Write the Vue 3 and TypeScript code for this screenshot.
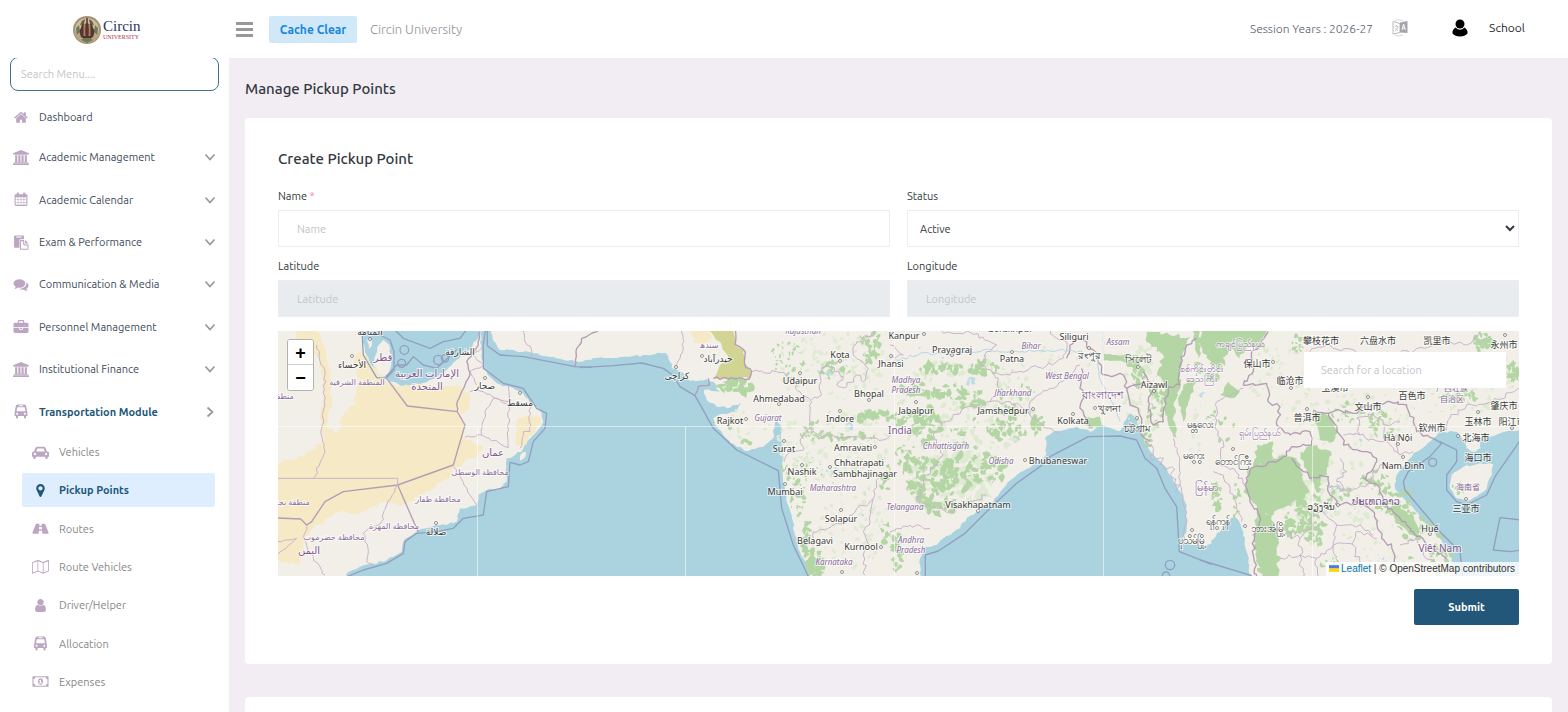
<script setup lang="ts">
import { ref } from 'vue'

type Pt = [number, number]
interface IconDef { box: string; path: string }
interface MenuItem { label: string; icon: string; open?: boolean; current?: boolean }
interface Line { pts: string; kind: string; rough?: number }
interface MapLabel { t: string; x: number; y: number; k: string }

const icons: Record<string, IconDef> = {
  home: { box: '0 0 1792 1792', path: 'M1472 992v480q0 26-19 45t-45 19h-384v-384h-256v384h-384q-26 0-45-19t-19-45v-480q0-1 .5-3t.5-3l575-474 575 474q1 2 1 6zm223-69l-62 74q-8 9-21 11h-3q-13 0-21-7l-692-577-692 577q-12 8-24 7-13-2-21-11l-62-74q-8-10-7-23.5t11-21.5l719-599q32-26 76-26t76 26l244 204v-195q0-14 9-23t23-9h192q14 0 23 9t9 23v408l219 182q10 8 11 21.5t-7 23.5z' },
  university: { box: '0 0 1920 1792', path: 'M960 0l960 384v128h-128q0 26-20.5 45t-48.5 19h-1526q-28 0-48.5-19t-20.5-45h-128v-128zm-704 640h256v768h128v-768h256v768h128v-768h256v768h128v-768h256v768h59q28 0 48.5 19t20.5 45v64h-1664v-64q0-26 20.5-45t48.5-19h59v-768zm1595 960q28 0 48.5 19t20.5 45v128h-1920v-128q0-26 20.5-45t48.5-19h1782z' },
  calendar: { box: '0 0 28 28', path: 'M7 1h2q1 0 1 1v2h8V2q0-1 1-1h2q1 0 1 1v2h2q2 0 2 2v18q0 2-2 2H4q-2 0-2-2V6q0-2 2-2h2V2q0-1 1-1zM4 10v4h4v-4zm5 0v4h4.500v-4zm5.500 0v4H19v-4zm5.500 0v4h4v-4zM4 15v4h4v-4zm5 0v4h4.500v-4zm5.500 0v4H19v-4zm5.500 0v4h4v-4zM4 20v4h4v-4zm5 0v4h4.500v-4zm5.500 0v4H19v-4zm5.500 0v4h4v-4z' },
  paste: { box: '0 0 28 28', path: 'M2 1h16q1.500 0 1.500 1.500V8H13q-2 0-2 2v14H2Q1 24 1 22.500v-20Q1 1 2 1zm3 2v1.500h10V3zM13 9.500h7V16q0 1.500 1.500 1.500H28V26q0 1.500-1.500 1.500h-13Q12 27.500 12 26V11q0-1.500 1-1.500zm1 2V25.500h12v-6h-5.500Q18 19.500 18 17v-5.500zM21.500 9.500L28 16h-6.500z' },
  comments: { box: '0 0 1792 1792', path: 'M1408 768q0 139-94 257t-256.5 186.500-353.500 68.500q-86 0-176-16-124 88-278 128-36 9-86 16h-3q-11 0-20.500-8t-11.500-21q-1-3-1-6.500t.5-6.500 2-6l2.500-5 3.500-5.500 4-5 4.500-5 4-4.500q5-6 23-25t26-29.500 22.500-29 25-38.500 20.500-44q-124-72-195-177t-71-224q0-139 94-257t256.500-186.500 353.500-68.500 353.500 68.500 256.500 186.500 94 257zm384 256q0 120-71 224.500t-195 176.500q10 24 20.500 44t25 38.500 22.500 29 26 29.500 23 25q1 1 4 4.500t4.500 5 4 5 3.500 5.500l2.500 5 2 6 .5 6.500-1 6.500q-3 14-13 22t-22 7q-50-7-86-16-154-40-278-128-90 16-176 16-271 0-472-132 58 4 88 4 161 0 309-45t264-129q125-92 192-212t67-254q0-77-23-152 129 71 204 178t75 230z' },
  briefcase: { box: '0 0 28 28', path: 'M10 2h8q2 0 2 2v3h5.500Q28 7 28 9.500V15H0V9.500Q0 7 2.500 7H8V4q0-2 2-2zm0 2v3h8V4zM0 16.500h10.500V19q0 1 1 1h5q1 0 1-1v-2.500H28v7q0 2.500-2.500 2.500h-23Q0 26 0 23.500zm12 0h4v2h-4z' },
  bus: { box: '0 0 24 28', path: 'M6 1h12q3.500 0 4 4l1.500 9q.500 2 .5 4v4.500h-2.500V25q0 2-2 2t-2-2v-2.500h-11V25q0 2-2 2t-2-2v-2.500H0V18q0-2 .5-4L2 5q.500-4 4-4zm2 1.500V4h8V2.500zM5 6L3.800 13.500h16.400L19 6zM4.700 16.500a1.800 1.800 0 1 0 .1 0zm14.500 0a1.800 1.800 0 1 0 .1 0z' },
  car: { box: '0 0 32 28', path: 'M10 3h12q3 0 4 3l1.800 6H29q3 0 3 3v7h-2.500v2q0 2.500-2 2.500t-2.500-2.500v-2H7v2q0 2.500-2.500 2.500T2.500 24v-2H0v-7q0-3 3-3h1.200L6 6q1-3 4-3zm0 3.500L8 12h16l-2-5.500zM5.500 14.500a2.300 2.300 0 1 0 .1 0zm21 0a2.300 2.300 0 1 0 .1 0z' },
  pin: { box: '0 0 1792 1792', path: 'M1152 640q0-106-75-181t-181-75-181 75-75 181 75 181 181 75 181-75 75-181zm256 0q0 109-33 179l-364 774q-16 33-47.500 52t-67.500 19-67.500-19-46.500-52l-365-774q-33-70-33-179 0-212 150-362t362-150 362 150 150 362z' },
  road: { box: '0 0 30 28', path: 'M7.500 5H13l-.3 4h4.600L17 5h5.500q1 0 1.500 1.500l6 15q.500 2.500-1.500 2.500h-10l-.5-6h-6l-.5 6h-10q-2 0-1.500-2.500l6-15Q6.500 5 7.500 5zm5 6l-.4 4.500h5.800L17.500 11z' },
  map: { box: '0 0 32 28', path: 'M11 1.500l10 4 10-4q1 0 1 1v19.500q0 .8-.8 1.200L21 27.500l-10-4-10 4q-1 0-1-1V7q0-.8.8-1.200zM1.500 7.500v18l8.800-3.500V4zm10.300-3.600V22l8.500 3.500v-18zm10 3.600v18l8.700-3.500V4z' },
  user: { box: '0 0 1792 1792', path: 'M1536 1399q0 109-62.500 187t-150.500 78h-854q-88 0-150.500-78t-62.500-187q0-85 8.500-160.500t31.500-152 58.500-131 94-89 134.500-34.500q131 128 313 128t313-128q76 0 134.500 34.500t94 89 58.500 131 31.500 152 8.500 160.500zm-256-887q0 159-112.500 271.500t-271.500 112.500-271.500-112.500-112.500-271.500 112.500-271.500 271.500-112.500 271.500 112.500 112.500 271.500z' },
  money: { box: '0 0 30 28', path: 'M1 4h28q1 0 1 1v18q0 1-1 1H1q-1 0-1-1V5q0-1 1-1zm4 2q0 4-3 4v8q3 0 3 4h20q0-4 3-4v-8q-3 0-3-4zm10 2q4.500 0 4.500 6T15 20t-4.500-6T15 8zm-.8 2.500l-2 1.500.8 1 .8-.5V16H12.500v1.500h5V16H16v-5.500z' },
}

const menu: MenuItem[] = [
  { label: 'Academic Management', icon: 'university' },
  { label: 'Academic Calendar', icon: 'calendar' },
  { label: 'Exam & Performance', icon: 'paste' },
  { label: 'Communication & Media', icon: 'comments' },
  { label: 'Personnel Management', icon: 'briefcase' },
  { label: 'Institutional Finance', icon: 'university' },
  { label: 'Transportation Module', icon: 'bus', open: true },
]
const submenu: MenuItem[] = [
  { label: 'Vehicles', icon: 'car' },
  { label: 'Pickup Points', icon: 'pin', current: true },
  { label: 'Routes', icon: 'road' },
  { label: 'Route Vehicles', icon: 'map' },
  { label: 'Driver/Helper', icon: 'user' },
  { label: 'Allocation', icon: 'bus' },
  { label: 'Expenses', icon: 'money' },
]

const menuQuery = ref('')
const name = ref('')
const status = ref('Active')
const place = ref('')

/* Seeded generator, so the terrain is the same on each load. */
let seed = 20267
function rnd(): number {
  seed = (seed * 16807) % 2147483647
  return seed / 2147483647
}
function parse(s: string): Pt[] {
  return s.trim().split(/\s+/).map(p => p.split(',').map(Number) as Pt)
}
/* Adds small bends between the given points. */
function wobble(s: string, amp: number, close = false): string {
  const pts = parse(s)
  if (close) pts.push(pts[0])
  let d = `M${pts[0][0]},${pts[0][1]}`
  for (let i = 1; i < pts.length; i++) {
    const [ax, ay] = pts[i - 1]
    const [bx, by] = pts[i]
    const n = amp ? Math.max(1, Math.round(Math.hypot(bx - ax, by - ay) / 11)) : 1
    for (let k = 1; k <= n; k++) {
      const f = k / n
      const j = k === n ? 0 : amp
      d += `L${Math.round(ax + (bx - ax) * f + (rnd() - 0.5) * j)},${Math.round(ay + (by - ay) * f + (rnd() - 0.5) * j)}`
    }
  }
  return close ? d + 'Z' : d
}
function blob(x: number, y: number, r: number): string {
  const n = 7
  const turn = rnd() * 3
  const stretch = 0.4 + rnd() * 0.4
  let d = ''
  for (let i = 0; i < n; i++) {
    const a = (i / n) * Math.PI * 2
    const q = r * (0.5 + rnd() * 0.9)
    const px = Math.cos(a) * q
    const py = Math.sin(a) * q * stretch
    d += `${i ? 'L' : 'M'}${Math.round(x + px * Math.cos(turn) - py * Math.sin(turn))},${Math.round(y + px * Math.sin(turn) + py * Math.cos(turn))}`
  }
  return d + 'Z'
}
function scatter(zones: number[][]): string {
  let d = ''
  for (const [cx, cy, rx, ry, n, r] of zones) {
    for (let i = 0; i < n; i++) {
      const a = rnd() * Math.PI * 2
      const q = Math.sqrt(rnd())
      d += blob(cx + Math.cos(a) * q * rx, cy + Math.sin(a) * q * ry, r * (0.4 + rnd()))
    }
  }
  return d
}

const sheets = [
  {
    shift: 'translate(-24 -18)',
    land: [
      '0,0 275,0 278,50 290,90 312,130 330,158 352,160 362,170 400,182 470,172 520,142 560,105 600,70 625,40 640,0 630,50 635,100 640,130 680,175 730,190 760,205 790,240 815,265 820,290 800,320 770,350 755,380 735,390 710,400 710,470 690,490 650,495 625,510 620,540 570,550 560,590 530,600 500,600 440,620 400,650 395,680 340,710 270,725 230,745 220,775 0,775',
      '660,0 668,45 690,75 720,75 790,85 850,95 915,110 965,104 965,0',
      '318,150 312,110 322,65 340,45 358,60 364,100 358,140 340,155',
      '290,45 302,40 306,62 296,72', '750,392 768,380 762,400 750,408',
    ],
    sand: [
      '80,0 130,0 160,60 182,150 186,230 170,300 200,330 222,270 250,240 265,180 255,100 272,75 310,125 355,180 400,183 560,180 600,210 562,260 585,300 580,335 640,370 610,400 550,430 540,455 470,500 400,540 340,530 280,560 200,560 130,610 100,650 90,720 0,700 0,420 100,395 158,350 150,300 160,200 150,100 80,50',
      '740,290 775,270 812,280 795,325 755,370 735,350', '565,225 600,210 600,250 575,270',
    ],
    scrub: [] as string[],
    woods: '',
    pale: '',
    wet: '',
    lines: [
      { pts: '350,160 412,243 562,260 585,300 550,420 383,480 220,500 165,530 125,590 110,600 92,582 0,578', kind: 'nation' },
      { pts: '562,260 562,230 585,180 600,150 590,110 625,60 630,20', kind: 'nation', rough: 5 },
      { pts: '383,480 445,622', kind: 'nation' },
      { pts: '648,0 640,60 640,130 700,175 760,190 800,250 830,265 825,310 790,350 775,410 750,420 720,412 715,485 650,500 640,570 580,580 550,610 500,620 440,625 405,650 400,685 350,715 280,735 220,760', kind: 'sea' },
      { pts: '652,0 652,62 690,90 760,95 850,112 915,125 965,127', kind: 'sea' },
      { pts: '275,0 280,90 320,158 348,160 372,135 372,80 360,45 330,30 345,0', kind: 'sea' },
      { pts: '360,0 400,40 480,70 520,50 570,40 600,0', kind: 'sea' },
      { pts: '348,155 380,120 410,120 430,95 460,120 500,130 560,75', kind: 'sea' },
      { pts: '0,460 383,460 383,480', kind: 'state' },
      { pts: '140,60 165,150 165,240 155,310 165,380 130,460', kind: 'state', rough: 10 },
      { pts: '383,480 350,540 335,590 280,625 295,680 290,710 310,718', kind: 'state', rough: 8 },
      { pts: '550,425 600,510 622,540', kind: 'state', rough: 6 },
      { pts: '585,337 635,330 715,368 715,240 640,200 600,200', kind: 'state', rough: 8 },
      { pts: '635,330 645,260 670,220 715,230 715,180', kind: 'state', rough: 8 },
      { pts: '780,225 780,320 760,320 750,370', kind: 'state', rough: 6 },
      { pts: '755,0 765,50 785,75 785,100', kind: 'state', rough: 6 },
      { pts: '915,125 920,70 955,30 960,0', kind: 'nation', rough: 8 },
      { pts: '110,600 100,640 130,700 165,750', kind: 'state', rough: 10 },
      { pts: '0,655 80,640 0,710', kind: 'state', rough: 4 },
      { pts: '640,60 610,90 640,120 600,140 620,180', kind: 'state', rough: 8 },
    ] as Line[],
    rings: [[403, 75, 13], [395, 115, 12], [505, 105, 14], [525, 100, 11]],
  },
  {
    shift: 'translate(906 -18)',
    land: [
      '0,0 0,105 40,100 100,100 150,95 200,90 258,84 270,110 275,130 310,145 330,168 380,163 400,170 420,200 372,195 380,225 410,245 450,248 482,232 470,262 420,268 400,280 405,298 430,330 470,365 505,378 550,365 580,340 583,310 590,285 605,310 605,350 612,400 605,440 615,490 620,530 635,570 645,630 660,680 690,740 690,775 960,775 960,0',
    ],
    sand: ['330,0 400,0 395,40 370,60 340,50'],
    scrub: ['378,0 462,0 465,60 492,75 495,115 515,145 508,160 400,162 420,120 445,105 425,60'],
    woods: scatter([[470, 185, 50, 20, 26, 14], [625, 100, 60, 50, 30, 6], [760, 135, 50, 25, 26, 7], [870, 60, 35, 55, 34, 9], [890, 275, 60, 18, 34, 10], [700, 320, 40, 30, 22, 7], [800, 335, 90, 12, 24, 8], [500, 350, 20, 8, 8, 9], [445, 312, 12, 6, 4, 5], [620, 440, 18, 40, 12, 5], [655, 520, 24, 50, 22, 8], [680, 640, 12, 55, 22, 9], [705, 715, 25, 40, 40, 11], [930, 470, 30, 50, 30, 9], [930, 640, 28, 60, 22, 8], [700, 450, 80, 60, 22, 4]]),
    pale: scatter([[760, 130, 170, 110, 110, 8], [760, 360, 170, 110, 120, 8], [820, 600, 110, 130, 80, 7], [500, 300, 90, 50, 20, 6]]),
    wet: scatter([[810, 300, 10, 12, 4, 8], [760, 440, 20, 16, 6, 6], [740, 130, 30, 20, 6, 5], [870, 550, 30, 60, 8, 4]]),
    lines: [
      { pts: '0,128 100,122 185,114 250,130 278,150 300,185 345,212 375,265 400,310 470,375 595,437 605,550 640,660 695,775', kind: 'sea' },
      { pts: '345,212 355,185 388,180 385,160', kind: 'nation', rough: 6 },
      { pts: '400,160 508,162 515,140 495,120 492,75 465,58 465,0', kind: 'nation', rough: 8 },
      { pts: '0,60 5,40 50,20 60,0', kind: 'nation', rough: 6 },
      { pts: '515,140 590,140 640,160 655,200 695,230 690,260 690,310 660,345 670,375 620,390 612,410', kind: 'state', rough: 12 },
      { pts: '695,225 725,210 720,150 740,120 790,155 770,180 800,185 830,150 850,170 865,130 820,90 830,50 890,20', kind: 'state', rough: 12 },
      { pts: '690,310 730,335 820,335 910,345 945,320', kind: 'state', rough: 10 },
      { pts: '895,460 880,520 810,570 790,595 700,620 700,660 665,665', kind: 'state', rough: 14 },
      { pts: '880,520 870,590 850,620 870,660 850,690 855,750', kind: 'state', rough: 12 },
      { pts: '300,0 312,50 300,100 285,130', kind: 'state', rough: 8 },
    ] as Line[],
    rings: [] as number[][],
  },
  {
    shift: 'translate(1836 -18)',
    land: [
      '0,0 0,775 92,775 90,700 100,668 140,660 160,640 210,610 215,595 260,560 310,530 340,490 380,450 430,420 470,388 465,340 490,320 560,305 600,320 640,300 690,318 700,300 720,265 745,280 755,320 775,370 800,400 830,430 850,470 870,500 890,540 890,610 880,650 905,660 940,665 965,655 965,0',
    ],
    sand: [] as string[],
    scrub: [] as string[],
    woods:
      wobble('640,85 690,92 760,90 740,140 700,110 640,108', 8, true) + wobble('770,20 840,30 900,35 880,80 870,180 850,240 860,340 835,300 820,180 800,150 820,90 770,50', 14, true) + wobble('905,0 965,0 965,70 925,100', 10, true) + wobble('880,180 920,165 900,220 880,290 865,230', 10, true) + wobble('600,280 630,275 635,305 595,310', 6, true) +
      scatter([[150, 130, 70, 14, 30, 11], [280, 130, 45, 18, 24, 11], [130, 195, 100, 22, 46, 10], [240, 220, 60, 25, 28, 9], [60, 285, 60, 30, 30, 9], [110, 300, 40, 60, 40, 10], [230, 330, 50, 55, 22, 7], [350, 320, 60, 30, 40, 9], [440, 300, 22, 30, 18, 10], [350, 270, 40, 30, 20, 8], [100, 460, 70, 65, 74, 11], [200, 450, 60, 60, 52, 11], [290, 430, 60, 45, 44, 10], [150, 540, 50, 30, 32, 10], [50, 400, 35, 45, 18, 8], [380, 210, 60, 40, 16, 6], [745, 150, 22, 40, 22, 9], [800, 250, 25, 70, 26, 9], [770, 340, 20, 30, 14, 8], [20, 680, 16, 70, 26, 8], [600, 290, 20, 12, 8, 9]]),
    pale: scatter([[220, 250, 210, 150, 150, 10], [180, 470, 140, 90, 100, 13], [460, 110, 150, 90, 40, 6], [760, 200, 70, 130, 60, 9], [930, 350, 30, 150, 30, 6]]),
    wet: scatter([[240, 168, 14, 10, 5, 8], [370, 350, 10, 8, 3, 6], [940, 210, 8, 14, 4, 6], [200, 100, 150, 60, 8, 4], [760, 330, 8, 30, 5, 6]]),
    lines: [
      { pts: '106,775 106,690 145,678 225,625 300,550 380,475 450,425 480,395 595,335 690,333 740,345 765,400 800,430 825,490 860,545 868,680 965,718', kind: 'sea' },
      { pts: '150,0 160,25 240,22 320,60 290,80 272,120 310,145 360,150 440,125 460,130 520,100 530,50 480,25 480,0', kind: 'state', rough: 12 },
      { pts: '310,145 330,195 300,230 220,250 170,290 130,330 160,390 100,460 80,530 140,550 180,560 240,530 290,510', kind: 'state', rough: 14 },
      { pts: '300,230 380,235 420,270 470,310 510,325', kind: 'state', rough: 12 },
      { pts: '420,270 420,230 480,190 540,160 570,120', kind: 'state', rough: 10 },
      { pts: '575,130 570,190 580,220 570,250 600,305', kind: 'nation', rough: 10 },
      { pts: '530,100 540,60 570,40 625,90 640,150 700,150 710,190 760,170', kind: 'nation', rough: 12 },
      { pts: '710,190 720,240 745,250 755,280 755,330 780,350', kind: 'nation', rough: 10 },
      { pts: '760,140 775,170 790,190 775,230 790,300 820,290 825,230 835,185 870,180 870,120 890,60 920,40', kind: 'nation', rough: 10 },
      { pts: '765,350 790,370 780,390 815,400 810,420 845,425 840,450 870,480 860,500', kind: 'state', rough: 26 },
      { pts: '0,100 40,90 0,60', kind: 'state', rough: 10 },
      { pts: '120,610 60,600 0,620', kind: 'state', rough: 10 },
      { pts: '880,650 890,560 870,480 870,400 850,340', kind: 'state', rough: 8 },
      { pts: '640,20 640,90', kind: 'river', rough: 6 },
      { pts: '622,95 628,160 650,200 680,260 690,290', kind: 'river', rough: 6 },
      { pts: '0,115 90,85 180,90 280,75 430,80 540,75 610,90', kind: 'river', rough: 10 },
    ] as Line[],
    rings: [[840, 720, 14], [828, 752, 11]],
  },
  {
    shift: 'translate(2766 -18)',
    land: [
      '0,0 0,662 30,650 60,620 92,580 110,580 130,620 140,680 155,775 770,775 755,700 720,640 680,600 640,550 610,520 585,490 590,450 620,410 650,380 700,340 720,320 770,320 790,345 800,370 815,380 842,370 840,342 870,335 900,325 965,312 965,0',
      '840,415 880,418 876,450 850,500 800,528 770,520 750,490 755,450 790,425',
    ],
    sand: [] as string[],
    scrub: [] as string[],
    woods:
      wobble('0,0 205,0 190,70 150,60 120,100 90,70 60,130 20,90 0,60', 14, true) + wobble('150,430 215,400 250,390 290,400 310,450 330,500 270,540 220,570 170,560 150,520 130,500', 16, true) + wobble('170,560 215,570 235,640 235,775 185,775 160,650', 14, true) + wobble('300,380 350,360 395,390 380,440 350,500 320,440', 14, true) + wobble('340,255 390,275 415,320 400,350 360,345 350,300', 12, true) + wobble('60,210 85,170 120,200 100,220', 8, true) + wobble('560,545 620,560 660,620 650,640 600,600', 12, true) + wobble('170,360 220,350 220,400 160,430', 12, true) +
      scatter([[30, 100, 40, 70, 30, 12], [60, 300, 45, 50, 12, 7], [50, 510, 14, 40, 22, 9], [300, 590, 50, 60, 60, 10], [350, 620, 30, 40, 20, 9], [530, 470, 50, 35, 24, 8], [580, 530, 60, 50, 30, 10], [640, 600, 50, 50, 22, 8], [720, 690, 35, 60, 22, 9], [550, 290, 50, 50, 24, 7], [440, 260, 60, 30, 18, 6], [780, 215, 60, 20, 30, 8], [850, 50, 30, 25, 24, 9], [940, 140, 18, 30, 22, 9], [290, 60, 20, 30, 12, 8], [360, 540, 40, 50, 16, 8], [780, 490, 25, 20, 14, 6], [420, 500, 40, 30, 12, 7], [110, 530, 10, 60, 18, 6], [400, 720, 50, 20, 12, 6], [610, 720, 60, 30, 12, 6]]),
    pale: scatter([[450, 280, 200, 90, 90, 7], [250, 150, 120, 90, 50, 7], [870, 180, 80, 100, 46, 7], [430, 500, 130, 100, 60, 9], [700, 200, 120, 70, 40, 6], [260, 480, 110, 120, 60, 12]]) + scatter([[480, 640, 200, 90, 40, 7]]),
    wet: scatter([[410, 490, 14, 10, 5, 6], [10, 210, 8, 8, 3, 6], [480, 360, 30, 20, 4, 4], [530, 700, 60, 40, 6, 4]]),
    lines: [
      { pts: '0,705 155,752', kind: 'sea' },
      { pts: '720,350 770,375 770,410 740,450 740,495 770,530 800,540 860,510 885,455 965,340', kind: 'sea' },
      { pts: '700,340 725,355 690,395 625,440 610,470 615,495 720,620 780,680 790,775', kind: 'sea' },
      { pts: '965,585 900,578 880,675 930,680 965,675', kind: 'sea' },
      { pts: '205,20 180,60 155,80 160,140 130,180 200,175 205,230 240,245 230,300 270,330 330,320 335,360 275,365 250,395', kind: 'nation', rough: 12 },
      { pts: '250,395 215,410 150,430 135,480 150,530 180,575 160,650 170,775', kind: 'nation', rough: 12 },
      { pts: '275,400 310,440 330,460 385,455 390,510 420,540 480,530 520,560 540,620 580,680 600,775', kind: 'nation', rough: 14 },
      { pts: '340,255 385,265 420,330 430,360 500,380 530,400 520,430 490,460 540,490 560,540 620,600 680,660 740,700', kind: 'nation', rough: 12 },
      { pts: '385,265 410,255 460,265 500,240 560,230 620,240 640,290 650,320 700,340', kind: 'nation', rough: 14 },
      { pts: '50,230 45,310 70,350 60,420 100,430 140,480', kind: 'state', rough: 12 },
      { pts: '50,230 130,190', kind: 'state', rough: 8 },
      { pts: '40,440 70,450 110,540 125,590', kind: 'state', rough: 8 },
      { pts: '240,620 300,640 300,690 350,700 400,660 460,660 470,620 530,640', kind: 'state', rough: 16 },
      { pts: '240,700 300,690 310,760', kind: 'state', rough: 14 },
      { pts: '350,700 360,775', kind: 'state', rough: 14 },
      { pts: '400,660 410,600 370,560', kind: 'state', rough: 12 },
      { pts: '460,660 480,720 540,730 540,775', kind: 'state', rough: 14 },
      { pts: '410,600 480,600 520,630', kind: 'state', rough: 12 },
      { pts: '300,640 340,600 330,550 370,560', kind: 'state', rough: 14 },
      { pts: '400,660 420,720 400,775', kind: 'state', rough: 14 },
      { pts: '430,330 480,330 540,350 590,330 600,390 640,380', kind: 'state', rough: 16 },
      { pts: '480,330 470,280 520,270 560,300 600,290', kind: 'state', rough: 14 },
      { pts: '560,300 550,340 580,370 600,390', kind: 'state', rough: 14 },
      { pts: '380,480 450,500 500,480 540,420 600,430', kind: 'state', rough: 14 },
      { pts: '420,400 440,440 410,470 450,500', kind: 'state', rough: 14 },
      { pts: '340,100 330,80 380,60 500,90 640,80 720,50 800,60 840,20', kind: 'state', rough: 12 },
      { pts: '650,320 740,315 750,280 800,240 880,230 957,190', kind: 'state', rough: 14 },
      { pts: '600,660 650,640 670,690 720,720', kind: 'state', rough: 14 },
    ] as Line[],
    rings: [[698, 412, 12]],
  },
]
const drawn = sheets.map(s => ({
  shift: s.shift,
  land: s.land.map(p => wobble(p, 7, true)).join(''),
  sand: s.sand.map(p => wobble(p, 12, true)).join(''),
  scrub: s.scrub.map(p => wobble(p, 8, true)).join(''),
  woods: s.woods,
  pale: s.pale,
  wet: s.wet,
  lines: s.lines.map(l => ({ kind: l.kind, d: wobble(l.pts, l.rough ?? 0) })),
  rings: s.rings,
}))

const dots: Pt[] = [[74, 25], [207, 47], [242, 62], [92, 8], [158, 192], [424, 25], [398, 36], [562, 30], [522, 42], [501, 73], [591, 69], [468, 88], [562, 80], [506, 110], [597, 116], [552, 136], [524, 134], [507, 153], [563, 179], [603, 216], [564, 241], [646, 3], [613, 25], [674, 24], [734, 21], [811, 17], [860, 36], [876, 60], [638, 71], [755, 78], [795, 83], [817, 77], [859, 87], [747, 129], [700, 180], [916, 131], [955, 118], [995, 31], [1013, 57], [1029, 78], [1090, 66], [1227, 4], [1120, 113], [1125, 126], [1180, 105], [1188, 168], [1200, 81], [1234, 97], [1152, 203], [967, 195], [939, 197], [1060, 174], [914, 199], [639, 242]]

function rows(k: string, list: [string, number, number][]): MapLabel[] {
  return list.map(([t, x, y]) => ({ t, x, y, k }))
}
const labels: MapLabel[] = [
  ...rows('city', [
    ['المنامة', 92, 4], ['الشارقة', 182, 24], ['الأحساء', 74, 37], ['صحار', 207, 58], ['مسقط', 242, 75], ['صلالة', 158, 204],
    ['حيدرآباد', 440, 31], ['کراچی', 399, 48], ['Kota', 562, 27], ['Kanpur', 626, 8], ['Udaipur', 522, 53], ['Ahmedabad', 501, 71],
    ['Bhopal', 591, 66], ['Rajkot', 452, 93], ['Indore', 562, 91], ['Surat', 506, 121], ['Amravati', 575, 120], ['Chhatrapati', 581, 135],
    ['Sambhajinagar', 587, 146], ['Nashik', 524, 144], ['Mumbai', 507, 164], ['Solapur', 563, 191], ['Belagavi', 537, 213], ['Kurnool', 583, 219],
    ['Jhansi', 613, 36], ['Prayagraj', 674, 22], ['Patna', 734, 31], ['Gorakhpur', 732, 1], ['Siliguri', 796, 9],
    ['Aizawl', 876, 57], ['Jabalpur', 638, 83], ['Jamshedpur', 725, 83], ['Kolkata', 795, 93],
    ['Bhubaneswar', 780, 133], ['Visakhapatnam', 700, 177],
    ['保山市', 979, 36], ['临沧市', 1012, 53], ['攀枝花市', 1043, 13], ['六盘水市', 1100, 13], ['凯里市', 1159, 13], ['永州市', 1226, 17], ['玉溪市', 1057, 60],
    ['文山市', 1090, 79], ['百色市', 1134, 68], ['肇庆市', 1226, 78], ['普洱市', 1029, 90], ['玉林市', 1200, 94], ['阳江市', 1234, 94], ['钦州市', 1154, 100],
    ['Hà Nội', 1120, 110], ['北海市', 1198, 110], ['海口市', 1200, 130], ['Nam Định', 1125, 138], ['三亚市', 1188, 181],
    ['ວຽງຈັນ', 1043, 179], ['Huế', 1152, 201],
  ]),
  ...rows('city tall', [
    ['রংপুর', 811, 28], ['সিলেট', 860, 32], ['খুলনা', 831, 81], ['চট্টগ্রাম', 859, 101], ['မန္တလေး', 922, 97], ['မကွေး', 916, 128],
    ['ရန်ကုန်', 940, 194], ['ပုသိမ်မြို့', 914, 213], ['တောင်ကြီး', 955, 134], ['ဘားအံမြို့', 990, 201],
  ]),
  ...rows('state', [
    ['المنطقة الشرقية', 79, 54], ['محافظة الوسطى', 202, 144], ['محافظة ظفار', 160, 171], ['محافظة المهرة', 116, 198], ['محافظة حضرموت', 56, 209],
    ['منطقة', 5, 68], ['منطقة نجران', 10, 174], ['سندھ', 431, 17], ['广西壮族', 1174, 60], ['自治区', 1174, 71], ['海南省', 1190, 159],
  ]),
  ...rows('state wide', [['စစ်ကိုင်းတိုင်း', 924, 41], ['ဒေသကြီး', 924, 51], ['ကချင်ပြည်နယ်', 962, 16], ['ရှမ်းပြည်နယ်', 982, 105]]),
  ...rows('state slant', [
    ['Rajasthan', 525, 3], ['Gujarat', 490, 90], ['Maharashtra', 555, 160], ['Karnataka', 556, 234], ['Bihar', 753, 18], ['Assam', 840, 14],
    ['Madhya', 628, 52], ['Pradesh', 628, 62], ['West Bengal', 789, 48], ['Jharkhand', 735, 65], ['Chhattisgarh', 668, 118], ['Odisha', 723, 133],
    ['Telangana', 627, 179], ['Andhra', 633, 212], ['Pradesh', 633, 222],
  ]),
  ...rows('nation', [
    ['قطر', 105, 30], ['الإمارات العربية', 149, 46], ['المتحدة', 149, 59], ['عمان', 215, 125], ['اليمن', 31, 223], ['India', 622, 103],
    ['Việt Nam', 1162, 221], ['ປະເທດລາວ', 1098, 174],
  ]),
  ...rows('nation big', [['বাংলাদেশ', 825, 68], ['မြန်မာ', 928, 160]]),
]
</script>

<template>
  <div class="app">
    <header class="topbar">
      <a class="brand" href="#" aria-label="Circin University home">
        <svg class="crest" viewBox="0 0 28 28" aria-hidden="true">
          <circle cx="14" cy="14" r="14" fill="#a49274" />
          <circle cx="14" cy="14" r="12" fill="#cbbf9f" />
          <path d="M1 14a13 13 0 0 0 26 0l-5 2-3 7h-10l-3-7z" fill="#b7a684" />
          <path d="M9 7l3 2 2-4 2 4 3-2 1 5 2 3-2 6-3 2h-6l-3-2-2-6 2-3z" fill="#54362c" />
          <path d="M7 9l2-4 3-2-1 5zM21 9l-2-4-3-2 1 5zM13 2h2v5h-2z" fill="#6d5742" />
          <path d="M10.500 9h2v11h-2zM15.500 9h2v11h-2z" fill="#9c8468" />
          <path d="M12.500 12h3v6q-1.500 2-3 0z" fill="#6e2f2a" />
          <path d="M3 12l3-3 1 6-3 4zM25 12l-3-3-1 6 3 4zM8 24l3-2h6l3 2-6 3z" fill="#6f7a58" />
        </svg>
        <span class="brand-text"><span class="brand-name">Circin</span><span class="brand-sub">UNIVERSITY</span></span>
      </a>
      <button class="burger" type="button" aria-label="Toggle menu"><i></i><i></i><i></i></button>
      <button class="cache" type="button">Cache Clear</button>
      <span class="school-name">Circin University</span>
      <div class="tools">
        <span class="session">Session Years : 2026-27</span>
        <button class="icon-btn" type="button" aria-label="Language">
          <svg class="lang" viewBox="0 0 16 18" aria-hidden="true">
            <path d="M1 2.500L8 4.500v9L1 15z" fill="#fff" stroke="#bbb" />
            <path d="M8 3.500l7.500-1.500v12L8 13.500z" fill="#a3a5aa" />
            <path d="M10 11l1.600-6 1.800 6M10.500 9h2.500" fill="none" stroke="#fff" />
            <path d="M2.500 7l4 .5M4.500 6v1M6 8q-1 3-3 4M3 8.500q1 2 3 3" fill="none" stroke="#bbb" stroke-width=".8" />
            <path d="M3 16q3 2 8 0M3 1.500q3-1.500 8 0" fill="none" stroke="#ccc" stroke-width=".8" />
          </svg>
        </button>
        <button class="profile" type="button">
          <svg viewBox="0 0 16 18" aria-hidden="true">
            <circle cx="8" cy="5" r="4.500" />
            <path d="M3.500 8.500Q8 13 12.500 8.500 16 11 15.500 14.500 13 17.500 8 17.500T.5 14.500Q0 11 3.500 8.500z" />
          </svg>
          School
        </button>
      </div>
    </header>

    <div class="body">
      <nav class="sidebar" aria-label="Main menu">
        <input v-model="menuQuery" class="menu-search" type="search" placeholder="Search Menu...." aria-label="Search menu" />
        <a class="item home" href="#">
          <svg class="ico" :viewBox="icons.home.box" aria-hidden="true"><path :d="icons.home.path" /></svg>
          <span>Dashboard</span>
        </a>
        <div class="menu">
          <a v-for="m in menu" :key="m.label" class="item" :class="{ open: m.open }" href="#">
            <svg class="ico" :viewBox="icons[m.icon].box" aria-hidden="true"><path fill-rule="evenodd" :d="icons[m.icon].path" /></svg>
            <span>{{ m.label }}</span>
            <svg class="chev" viewBox="0 0 12 12" aria-hidden="true">
              <path :d="m.open ? 'M3.500 1.500L8.500 6l-5 4.500' : 'M1.500 3.500L6 8.500l4.500-5'" />
            </svg>
          </a>
        </div>
        <div class="submenu">
          <div v-for="m in submenu" :key="m.label" class="cell">
            <a class="subitem" :class="{ current: m.current }" href="#">
              <svg class="ico" :viewBox="icons[m.icon].box" aria-hidden="true"><path fill-rule="evenodd" :d="icons[m.icon].path" /></svg>
              <span>{{ m.label }}</span>
            </a>
          </div>
        </div>
      </nav>

      <main class="content">
        <h1>Manage Pickup Points</h1>
        <section class="card">
          <h2>Create Pickup Point</h2>
          <form @submit.prevent>
            <div class="fields">
              <div class="field">
                <label for="name">Name <b>*</b></label>
                <input id="name" v-model="name" type="text" placeholder="Name" />
              </div>
              <div class="field">
                <label for="status">Status</label>
                <select id="status" v-model="status">
                  <option>Active</option>
                  <option>Inactive</option>
                </select>
              </div>
              <div class="field">
                <label for="lat">Latitude</label>
                <input id="lat" type="text" placeholder="Latitude" readonly />
              </div>
              <div class="field">
                <label for="lng">Longitude</label>
                <input id="lng" type="text" placeholder="Longitude" readonly />
              </div>
            </div>

            <div class="map">
              <svg class="tiles" viewBox="0 0 1241 245" preserveAspectRatio="xMidYMid slice" role="img" aria-label="Map of South Asia">
                <g transform="scale(0.33333)">
                  <g v-for="s in drawn" :key="s.shift" :transform="s.shift">
                    <path class="land" :d="s.land" />
                    <path class="sand" :d="s.sand" />
                    <path class="scrub" :d="s.scrub" />
                    <path class="pale" :d="s.pale" />
                    <path class="woods" :d="s.woods" />
                    <path class="wet" :d="s.wet" />
                    <path v-for="(l, i) in s.lines" :key="i" class="line" :class="l.kind" :d="l.d" />
                    <circle v-for="(r, i) in s.rings" :key="'r' + i" class="line sea" :cx="r[0]" :cy="r[1]" :r="r[2]" />
                  </g>
                </g>
                <path class="seams" d="M0 95.500H1241M199.500 96V245M407.500 96V245M616.500 0V245M825.500 0V245M1034.500 96V245" />
                <circle v-for="(p, i) in dots" :key="i" class="dot" :cx="p[0]" :cy="p[1]" r="1.500" />
                <text v-for="(l, i) in labels" :key="i" class="lbl" :class="l.k" :x="l.x" :y="l.y">{{ l.t }}</text>
              </svg>
              <div class="zoom">
                <button type="button" aria-label="Zoom in">+</button>
                <button type="button" aria-label="Zoom out">−</button>
              </div>
              <input v-model="place" class="place" type="text" placeholder="Search for a location" aria-label="Search for a location" />
              <div class="credit">
                <svg viewBox="0 0 12 8" aria-hidden="true"><path fill="#4c7be1" d="M0 0h12v4H0z" /><path fill="#ffd500" d="M0 4h12v4H0z" /></svg>
                <a href="#">Leaflet</a> | © OpenStreetMap contributors
              </div>
            </div>

            <div class="actions"><button class="submit" type="submit">Submit</button></div>
          </form>
        </section>
        <section class="card next" aria-label="Pickup point list"></section>
      </main>
    </div>
  </div>
</template>

<style>
body { margin: 0; background: #f2edf3; }
</style>

<style scoped>
* { box-sizing: border-box; }
.app {
  height: 100vh;
  display: flex;
  flex-direction: column;
  overflow: hidden;
  font-family: Ubuntu, "Noto Sans", "Open Sans", "Noto Sans CJK SC", sans-serif;
  font-size: 12px;
  color: #343a40;
}
button, input, select { font: inherit; color: inherit; }
button { border: 0; padding: 0; background: none; cursor: pointer; }
a { color: inherit; text-decoration: none; }
input::placeholder { color: #c3c5c9; opacity: 1; }

.topbar { flex: none; height: 58px; display: flex; align-items: center; background: #fff; position: relative; z-index: 1; }
.brand { width: 236px; padding: 2px 0 0 73px; display: flex; align-items: center; gap: 2px; }
.crest { width: 28px; height: 28px; }
.brand-text { display: flex; flex-direction: column; font-family: "Liberation Serif", serif; }
.brand-name { font-size: 15px; line-height: 15px; color: #27365c; }
.brand-sub { font-size: 6px; line-height: 7px; color: #a8344a; }
.burger { width: 17px; display: flex; flex-direction: column; gap: 3px; }
.burger i { height: 3px; background: #999; }
.cache { margin-left: 16px; width: 88px; height: 27px; border-radius: 2px; background: #d1e8f8; color: #1a86dc; font-size: 12px; font-weight: 700; }
.school-name { margin-left: 13px; font-size: 13px; font-weight: 300; color: #8f9194; }
.tools { margin-left: auto; padding: 0 43px 2px 0; display: flex; align-items: center; }
.session { font-size: 12px; font-weight: 300; color: #50586a; }
.icon-btn { margin: 0 44px 0 19px; display: flex; }
.lang { width: 16px; height: 18px; }
.profile { display: flex; align-items: center; gap: 21px; font-size: 12px; line-height: 18px; color: #222; }
.profile svg { width: 16px; height: 18px; fill: #000; }

.body { flex: 1; min-height: 0; display: flex; }
.sidebar { flex: none; width: 229px; background: #fff; overflow: hidden; }
.menu-search {
  display: block; width: 209px; height: 34px; margin: -1px 0 7px 10px; padding: 0 10px;
  border: 1px solid #43718c; border-radius: 8px; background: #fff; font-size: 11px; outline: 0;
}
.item { display: flex; align-items: center; padding: 0 13px; gap: 10px; font-size: 11px; color: #3e4b5b; }
.item.home { height: 38px; }
.ico { width: 16px; height: 15px; fill: #bca6c1; }
.chev { margin-left: auto; width: 12px; height: 12px; fill: none; stroke: #999; stroke-width: 1.7; }
.menu { display: grid; grid-template-rows: repeat(7, 1fr); height: 297px; }
.item.open { font-weight: 700; color: #22577a; }
.submenu { display: grid; grid-template-rows: repeat(7, 1fr); height: 268px; padding: 0 14px 0 22px; }
.cell { display: flex; align-items: center; }
.subitem { flex: 1; height: 34px; padding-left: 10px; display: flex; align-items: center; gap: 10px; border-radius: 2px; font-size: 11px; color: #888; }
.subitem .ico { width: 17px; }
.subitem.current { background: #deeefe; color: #22577a; font-weight: 600; }
.subitem.current .ico { fill: #22577a; }

.content { flex: 1; min-width: 0; padding: 20px 16px 0; background: #f2edf3; overflow: hidden; }
h1, h2 { margin: 0; font-size: 15px; line-height: 22px; font-weight: 500; color: #343840; }
.card { margin-top: 18px; padding: 30px 33px 39px; border-radius: 4px; background: #fff; }
.card.next { margin-top: 33px; height: 80px; }
.fields { display: grid; grid-template-columns: 1fr 1fr; column-gap: 17px; row-gap: 9px; padding-top: 16px; }
.field label { display: block; height: 24px; line-height: 20px; font-size: 11px; }
.field label b { font-weight: 400; color: #fe7c96; }
.field input, .field select { display: block; width: 100%; height: 37px; border: 1px solid #ebedf2; background: #fff; font-size: 11px; border-radius: 0; outline: 0; }
.field input { padding: 0 18px; }
.field select { padding: 0 8px; }
.field input[readonly] { background: #e8ecef; }

.map { position: relative; height: 245px; margin-top: 14px; overflow: hidden; background: #aad3df; }
.tiles { display: block; width: 100%; height: 100%; }
.land { fill: #f2efe9; }
.sand { fill: #f6e9c6; }
.scrub { fill: #d2d493; }
.woods { fill: #b4d6a5; }
.pale { fill: #deead1; }
.wet { fill: #bddce6; }
.line { fill: none; stroke-linejoin: round; }
.line.nation { stroke: #b39db4; stroke-width: 4; }
.line.state { stroke: #c9b4ca; stroke-width: 3; }
.line.sea { stroke: #929fc0; stroke-width: 4; }
.line.river { stroke: #b5d6e4; stroke-width: 3; }
.seams { fill: none; stroke: #fff; stroke-opacity: .55; }
.dot { fill: #fff; stroke: #666; stroke-width: .7; }
.lbl {
  text-anchor: middle; font-family: "Noto Sans", "DejaVu Sans", "Noto Sans CJK SC", sans-serif; font-size: 9px;
  fill: #3c3c3c; stroke: #fff; stroke-opacity: .65; stroke-width: 2px; paint-order: stroke;
}
.lbl.tall { font-size: 10px; }
.lbl.state { fill: #8a6c9c; font-size: 8px; }
.lbl.wide { font-size: 9px; }
.lbl.slant { font-style: italic; }
.lbl.nation { fill: #805a91; font-size: 10px; }
.lbl.big { font-size: 11px; }
.zoom { position: absolute; left: 9px; top: 8px; border: 1px solid #b3b3ae; border-radius: 3px; display: flex; flex-direction: column; }
.zoom button { width: 25px; height: 25px; background: #fff; font: 700 18px/27px "Liberation Sans", Arial, sans-serif; color: #000; }
.zoom button:first-child { border-bottom: 1px solid #ccc; border-radius: 2px 2px 0 0; }
.zoom button:last-child { border-radius: 0 0 2px 2px; }
.place { position: absolute; right: 13px; top: 21px; width: 202px; height: 36px; padding: 0 17px; border: 0; background: #fff; font-size: 11px; outline: 0; }
.credit { position: absolute; right: 0; bottom: 0; padding: 0 4px 0 3px; background: rgba(255, 255, 255, .8); font: 10px/14px "Liberation Sans", Arial, sans-serif; color: #333; }
.credit svg { width: 10px; height: 7px; margin-right: 2px; }
.credit a { color: #0078a8; }

.actions { display: flex; justify-content: flex-end; margin-top: 13px; }
.submit { width: 105px; height: 36px; border-radius: 2px; background: #22577a; color: #fff; font-size: 11px; font-weight: 700; }
</style>
